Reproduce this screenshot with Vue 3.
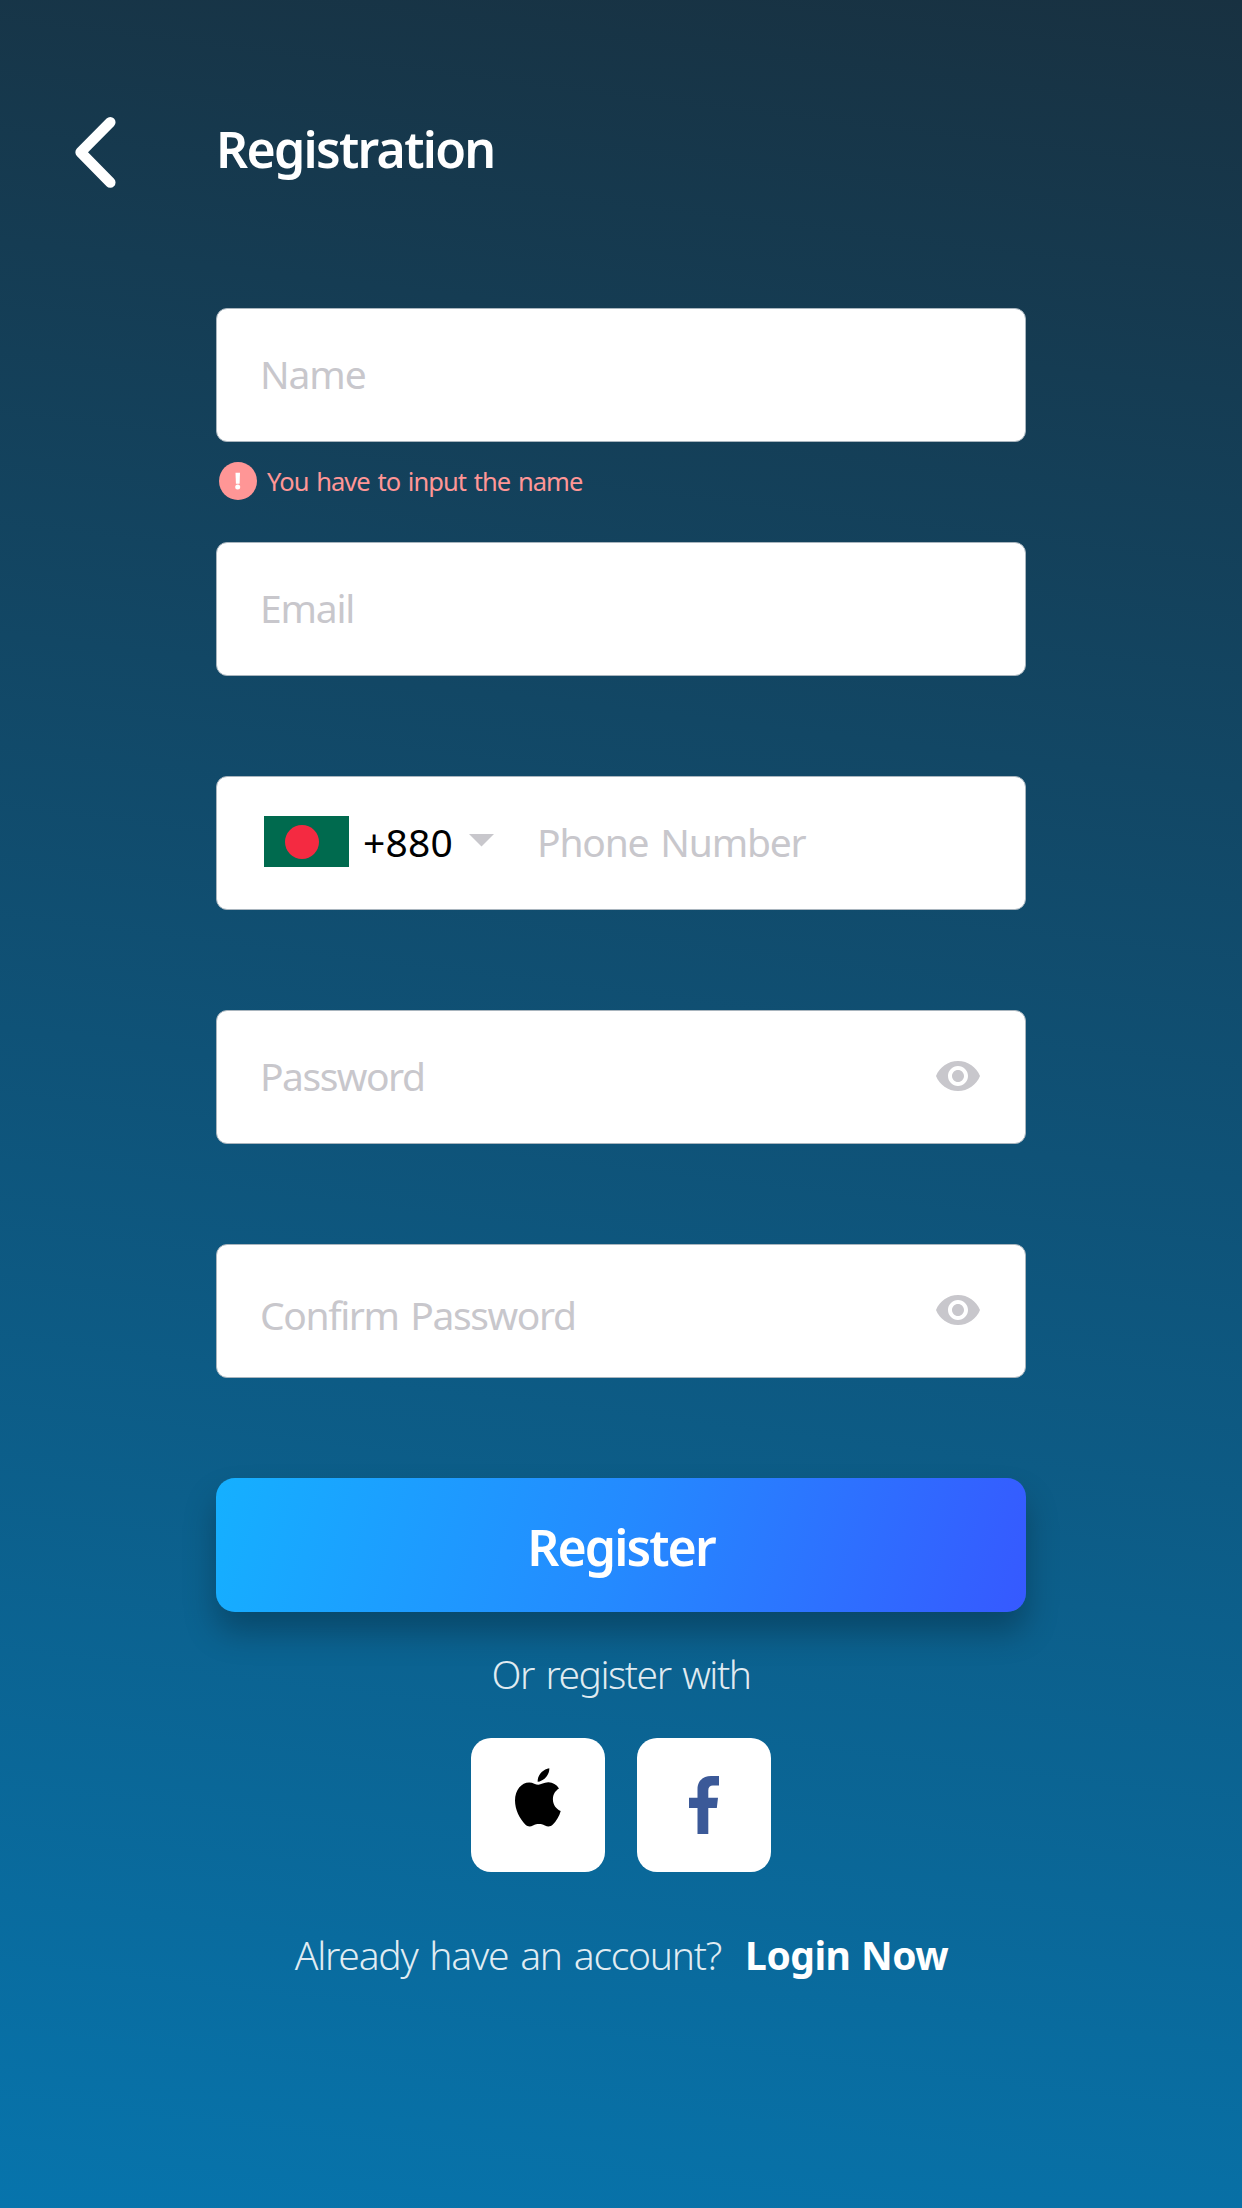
<script setup>
const fields = [
  { id: 'name', label: 'Name', error: 'You have to input the name' },
  { id: 'email', label: 'Email' },
  { id: 'phone', label: 'Phone Number', code: '+880' },
  { id: 'password', label: 'Password', secret: true },
  { id: 'confirm', label: 'Confirm Password', secret: true },
]
</script>

<template>
  <main class="page">
    <header class="header">
      <svg class="back" width="42" height="72" viewBox="0 0 42 72" fill="none" stroke="#fff" stroke-width="10.5" stroke-linecap="round" stroke-linejoin="round">
        <path d="M35.3 5.300 5.600 35.300l29.700 30.200" />
      </svg>
      <h1 class="title">Registration</h1>
    </header>

    <form class="form" @submit.prevent>
      <div v-for="f in fields" :key="f.id" class="group">
        <label class="field" :class="f.id">
          <span v-if="f.code" class="country">
            <svg class="flag" width="85" height="51" viewBox="0 0 85 51">
              <rect width="85" height="51" fill="#006a4e" />
              <circle cx="38" cy="26" r="17" fill="#f42a41" />
            </svg>
            <span class="code">{{ f.code }}</span>
            <svg class="caret" width="25" height="13" viewBox="0 0 25 13"><path d="M0 0h25L12.5 12.5z" fill="#c8c7cc" /></svg>
          </span>
          <span class="label">{{ f.label }}</span>
          <svg v-if="f.secret" class="eye" width="44" height="30" viewBox="1 4.5 22 15">
            <path fill="#c8c7cc" d="M12 4.5C7 4.5 2.73 7.61 1 12c1.73 4.39 6 7.5 11 7.5s9.27-3.11 11-7.5c-1.73-4.39-6-7.5-11-7.5zM12 17c-2.76 0-5-2.24-5-5s2.24-5 5-5 5 2.24 5 5-2.24 5-5 5zm0-8c-1.66 0-3 1.34-3 3s1.34 3 3 3 3-1.34 3-3-1.34-3-3-3z" />
          </svg>
        </label>
        <p v-if="f.error" class="error">
          <svg width="38" height="38" viewBox="0 0 38 38">
            <circle cx="19" cy="19" r="19" fill="#ff9696" />
            <path d="M16.500 10.700h4.500l-.4 11h-3.700z" fill="#fff" />
            <circle cx="18.700" cy="25" r="2.500" fill="#fff" />
          </svg>
          <span>{{ f.error }}</span>
        </p>
      </div>
      <button class="submit" type="submit">Register</button>
    </form>

    <p class="or">Or register with</p>
    <div class="socials">
      <button class="social" aria-label="Apple">
        <svg width="134" height="134" viewBox="0 0 134 134">
          <path d="M78.300 30.300C78.700 36.500 72.500 43.500 66.700 43.700C66.200 37 72.500 31 78.300 30.300zM88 50.500C84.500 52.600 81.900 56.500 81.900 61.200C81.900 66.500 85 71 89.700 73C88.300 78.500 85.200 83.200 81.600 86.800C79.600 88.700 76.700 88.900 73.900 87.500C69.600 85.600 66.300 85.600 62 87.500C59.300 88.900 56.600 88.700 54.500 86.700C48.500 80.500 44 71.500 44 62.500C44 52 50.500 44.500 58.200 44.500C62 44.500 64.800 46.800 67.300 46.800C70 46.800 73 44.200 77.500 44.300C81.700 44.400 85.600 46.600 88 50.500z" />
        </svg>
      </button>
      <button class="social" aria-label="Facebook">
        <svg width="134" height="134" viewBox="0 0 134 134">
          <path fill="#3b5998" d="M60.500 96V70H52V59.700h8.500V51c0-8 5.500-13 13.500-13h8v9.600h-6c-3 0-4.700 1.600-4.700 4.700v7.400h9.700L79.800 70h-8.500v26z" />
        </svg>
      </button>
    </div>
    <p class="login"><span>Already have an account?</span><a>Login Now</a></p>
  </main>
</template>

<style>
body {
  margin: 0;
}
</style>

<style scoped>
.page {
  box-sizing: border-box;
  width: 1242px;
  height: 2208px;
  display: flex;
  flex-direction: column;
  background: linear-gradient(187deg, #183141 0%, #0f5277 50%, #0774ac 100%);
  font-family: "Noto Sans", "Open Sans", sans-serif;
  color: #fff;
}

.header {
  box-sizing: border-box;
  height: 308px;
  padding: 117px 0 0 75px;
  display: flex;
  align-items: flex-start;
}

.title {
  margin: -2px 0 0 99px;
  font-size: 50px;
  line-height: 68px;
  font-weight: 600;
  letter-spacing: -1.7px;
}

.form {
  width: 810px;
  margin-left: 216px;
}

.group {
  height: 234px;
}

.field {
  box-sizing: border-box;
  height: 134px;
  display: flex;
  align-items: center;
  padding: 0 45px 3px 43px;
  border: 1px solid #a9b5be;
  border-radius: 11px;
  background: #fff;
  color: #c8c7cc;
  font-size: 39px;
  line-height: 54px;
  word-spacing: 3px;
}

.name .label {
  letter-spacing: -1.1px;
}

.email .label {
  letter-spacing: -1.2px;
}

.phone .label {
  letter-spacing: -1.2px;
}

.password .label {
  letter-spacing: -1.5px;
}

.confirm .label {
  padding-top: 10px;
  letter-spacing: -1.4px;
}

.country {
  display: flex;
  align-items: center;
  width: 273px;
  padding-left: 4px;
}

.code {
  width: 106px;
  margin-left: 14px;
  color: #000;
  letter-spacing: 0.2px;
}

.caret {
  margin-bottom: 3px;
}

.eye {
  margin-left: auto;
}

.error {
  display: flex;
  align-items: center;
  margin: 20px 0 0 3px;
  color: #ff9696;
  font-size: 25.5px;
  line-height: 38px;
  letter-spacing: -0.95px;
  word-spacing: 2px;
}

.error span {
  margin-left: 10px;
}

.submit {
  display: block;
  width: 810px;
  height: 134px;
  padding: 4px 0 0;
  border: 0;
  border-radius: 19px;
  background: linear-gradient(106deg, #15b0ff 0%, #248aff 50%, #3659ff 100%);
  box-shadow: 0 20px 32px rgba(0, 0, 0, 0.26);
  color: #fff;
  font: 600 50px "Noto Sans", "Open Sans", sans-serif;
  letter-spacing: -1.9px;
}

.or {
  height: 126px;
  margin: 0;
  font-size: 39px;
  font-weight: 300;
  line-height: 124px;
  letter-spacing: -1.5px;
  word-spacing: 3px;
  text-align: center;
  color: rgba(255, 255, 255, 0.88);
}

.socials {
  display: flex;
  justify-content: center;
  gap: 32px;
}

.social {
  width: 134px;
  height: 134px;
  padding: 0;
  border: 0;
  border-radius: 20px;
  background: #fff;
}

.social svg {
  display: block;
}

.login {
  display: flex;
  justify-content: center;
  margin: 0;
  padding-left: 1px;
  font-size: 39px;
  line-height: 166px;
}

.login span {
  font-weight: 300;
  letter-spacing: -1.25px;
  word-spacing: 3px;
  color: rgba(255, 255, 255, 0.88);
}

.login a {
  margin-left: 24px;
  font-weight: 700;
  letter-spacing: -0.5px;
  word-spacing: 1px;
}
</style>
